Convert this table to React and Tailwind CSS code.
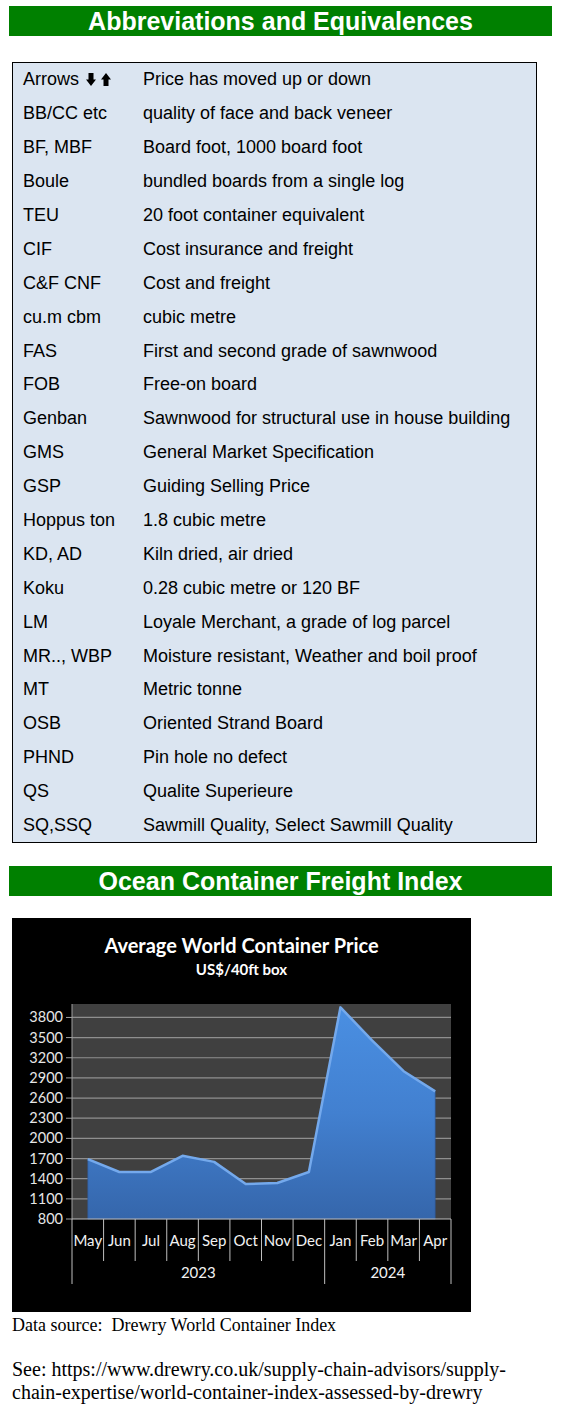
import React from "react";

const rows = [
  ["Arrows", "Price has moved up or down"],
  ["BB/CC etc", "quality of face and back veneer"],
  ["BF, MBF", "Board foot, 1000 board foot"],
  ["Boule", "bundled boards from a single log"],
  ["TEU", "20 foot container equivalent"],
  ["CIF", "Cost insurance and freight"],
  ["C&F CNF", "Cost and freight"],
  ["cu.m cbm", "cubic metre"],
  ["FAS", "First and second grade of sawnwood"],
  ["FOB", "Free-on board"],
  ["Genban", "Sawnwood for structural use in house building"],
  ["GMS", "General Market Specification"],
  ["GSP", "Guiding Selling Price"],
  ["Hoppus ton", "1.8 cubic metre"],
  ["KD, AD", "Kiln dried, air dried"],
  ["Koku", "0.28 cubic metre or 120 BF"],
  ["LM", "Loyale Merchant, a grade of log parcel"],
  ["MR.., WBP", "Moisture resistant, Weather and boil proof"],
  ["MT", "Metric tonne"],
  ["OSB", "Oriented Strand Board"],
  ["PHND", "Pin hole no defect"],
  ["QS", "Qualite Superieure"],
  ["SQ,SSQ", "Sawmill Quality, Select Sawmill Quality"],
];

function Arrows() {
  return (
    <svg width="28" height="14" viewBox="0 0 28 14" className="ml-[7px] inline-block">
      <path d="M2.5 0 H7.5 V6.5 H10 L5 13 L0 6.5 H2.5 Z" fill="#000" />
      <path d="M17.5 13 H22.5 V6.5 H25 L20 0 L15 6.5 H17.5 Z" fill="#000" />
    </svg>
  );
}

function Header({ children }) {
  return (
    <div className="ml-[9px] w-[543px] h-[30px] bg-[#008000] flex items-center justify-center">
      <span
        className="text-white font-bold text-[25px] leading-none"
        style={{ fontFamily: '"Liberation Sans", Arial, sans-serif' }}
      >
        {children}
      </span>
    </div>
  );
}

const months = ["May", "Jun", "Jul", "Aug", "Sep", "Oct", "Nov", "Dec", "Jan", "Feb", "Mar", "Apr"];
const values = [1690, 1500, 1500, 1740, 1650, 1320, 1335, 1500, 3950, 3460, 3000, 2700];

function Chart() {
  const x0 = 60;
  const x1 = 439;
  const yTop = 86;
  const yBase = 301;
  const k = (yBase - yTop) / 3200;
  const cw = (x1 - x0) / 12;
  const yOf = (v) => yBase - (v - 800) * k;
  const cx = (i) => x0 + (i + 0.5) * cw;
  const ticks = [];
  for (let v = 800; v <= 3800; v += 300) ticks.push(v);
  const pts = values.map((v, i) => `${cx(i).toFixed(2)},${yOf(v).toFixed(2)}`);
  const area = `M${cx(0).toFixed(2)},${yBase} L${pts.join(" L")} L${cx(11).toFixed(2)},${yBase} Z`;
  const topLine = `M${pts.join(" L")}`;
  const font = 'Lato, "Open Sans", sans-serif';
  return (
    <div className="ml-[12px] w-[459px] h-[394px] bg-black">
      <svg width="459" height="394" viewBox="0 0 459 394" style={{ fontFamily: font }}>
        <defs>
          <linearGradient id="areaFill" x1="0" y1="0" x2="0" y2="1">
            <stop offset="0" stopColor="#4a8fe2" />
            <stop offset="0.5" stopColor="#4280d0" />
            <stop offset="1" stopColor="#3566ab" />
          </linearGradient>
        </defs>
        <text x="229.5" y="35" textAnchor="middle" fill="#fff" fontWeight="700" fontSize="20">
          Average World Container Price
        </text>
        <text x="229.5" y="57" textAnchor="middle" fill="#fff" fontWeight="700" fontSize="15">
          US$/40ft box
        </text>
        <rect x={x0} y={yTop} width={x1 - x0} height={yBase - yTop} fill="#404040" />
        {ticks.map((v) =>
          v > 800 ? (
            <line key={v} x1={x0} x2={x1} y1={yOf(v)} y2={yOf(v)} stroke="#8f8f8f" strokeWidth="1.2" />
          ) : null
        )}
        {ticks.map((v) => (
          <line key={"t" + v} x1={x0 - 6} x2={x0} y1={yOf(v)} y2={yOf(v)} stroke="#a0a0a0" strokeWidth="1" />
        ))}
        {ticks.map((v) => (
          <text key={"l" + v} x={x0 - 9} y={yOf(v) + 5} textAnchor="end" fill="#e6e6e6" fontSize="14.5">
            {v}
          </text>
        ))}
        <line x1={x0} x2={x0} y1={yTop} y2={yBase} stroke="#a0a0a0" strokeWidth="1" />
        <path d={area} fill="url(#areaFill)" />
        <path d={area} fill="none" stroke="#2e5796" strokeWidth="1" opacity="0.6" />
        <path d={topLine} fill="none" stroke="#74a9ec" strokeWidth="2.5" strokeLinejoin="round" />
        <line x1={x0} x2={x1} y1={yBase} y2={yBase} stroke="#bfbfbf" strokeWidth="1" />
        {Array.from({ length: 13 }).map((_, i) => {
          const x = x0 + i * cw;
          const yr = i === 0 || i === 8 || i === 12;
          return (
            <line key={"s" + i} x1={x} x2={x} y1={yBase} y2={yr ? 366 : 343} stroke="#bfbfbf" strokeWidth="1" />
          );
        })}
        {months.map((m, i) => (
          <text key={m} x={cx(i)} y="328" textAnchor="middle" fill="#f2f2f2" fontSize="15">
            {m}
          </text>
        ))}
        <text x={(x0 + x0 + 8 * cw) / 2} y="360" textAnchor="middle" fill="#f2f2f2" fontSize="15">
          2023
        </text>
        <text x={(x0 + 8 * cw + x1) / 2} y="360" textAnchor="middle" fill="#f2f2f2" fontSize="15">
          2024
        </text>
      </svg>
    </div>
  );
}

export default function App() {
  return (
    <div className="w-[561px] h-[1410px] bg-white pt-[6px]">
      <Header>Abbreviations and Equivalences</Header>
      <div
        className="ml-[12px] mt-[26px] w-[525px] border border-black bg-[#dbe5f1] text-[18px] text-black"
        style={{ fontFamily: '"Liberation Sans", Arial, sans-serif' }}
      >
        {rows.map(([a, b], i) => (
          <div key={i} className="flex items-center h-[33.9px] pl-[10px]">
            <div className="w-[120px] shrink-0 flex items-center whitespace-nowrap">
              {a}
              {i === 0 && <Arrows />}
            </div>
            <div className="whitespace-nowrap">{b}</div>
          </div>
        ))}
      </div>
      <div className="mt-[23px]">
        <Header>Ocean Container Freight Index</Header>
      </div>
      <div className="mt-[22px]">
        <Chart />
      </div>
      <div
        className="ml-[12px] text-black"
        style={{ fontFamily: '"Liberation Serif", "Times New Roman", serif' }}
      >
        <div className="text-[18px] leading-[22px] pt-[2px]">Data source:&nbsp; Drewry World Container Index</div>
        <div className="mt-[22px] text-[20px] leading-[23px] whitespace-nowrap">
          See: https://www.drewry.co.uk/supply-chain-advisors/supply-
          <br />
          chain-expertise/world-container-index-assessed-by-drewry
        </div>
      </div>
    </div>
  );
}
